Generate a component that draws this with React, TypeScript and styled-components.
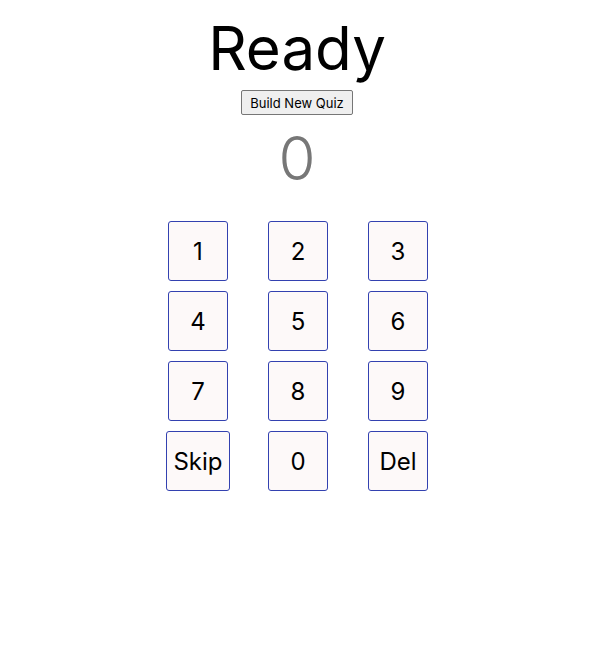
import styled, { createGlobalStyle } from "styled-components";

const GlobalStyle = createGlobalStyle`
  body {
    margin: 0;
    background: #ffffff;
    font-family: Inter, "Noto Sans", sans-serif;
  }
`;

const keys = ["1", "2", "3", "4", "5", "6", "7", "8", "9", "Skip", "0", "Del"];

const Screen = styled.div`
  display: flex;
  flex-direction: column;
  align-items: center;
  padding-top: 14px;
`;

const Title = styled.h1`
  margin: 0;
  font-size: 60px;
  font-weight: 400;
  line-height: 68px;
  color: #000;
`;

const BuildButton = styled.button`
  margin-top: 8px;
  height: 25px;
  padding: 0 8px;
  font-family: inherit;
  font-size: 13px;
  color: #000;
  background: #efefef;
  border: 1px solid #767676;
  border-radius: 2px;
`;

const Answer = styled.div`
  margin-top: 10px;
  font-size: 60px;
  font-weight: 300;
  line-height: 66px;
  color: #777777;
`;

const Pad = styled.div`
  margin: 30px 0 0 2px;
  display: grid;
  grid-template-columns: repeat(3, 60px);
  grid-auto-rows: 60px;
  column-gap: 40px;
  row-gap: 10px;
`;

const Key = styled.button`
  justify-self: center;
  min-width: 60px;
  height: 60px;
  padding: 0 6px;
  font-family: inherit;
  font-size: 24px;
  color: #000;
  background: #fdf9f9;
  border: 1px solid #3341b0;
  border-radius: 3px;
`;

export default function App() {
  return (
    <Screen>
      <GlobalStyle />
      <Title>Ready</Title>
      <BuildButton>Build New Quiz</BuildButton>
      <Answer>0</Answer>
      <Pad>
        {keys.map((k) => (
          <Key key={k}>{k}</Key>
        ))}
      </Pad>
    </Screen>
  );
}
